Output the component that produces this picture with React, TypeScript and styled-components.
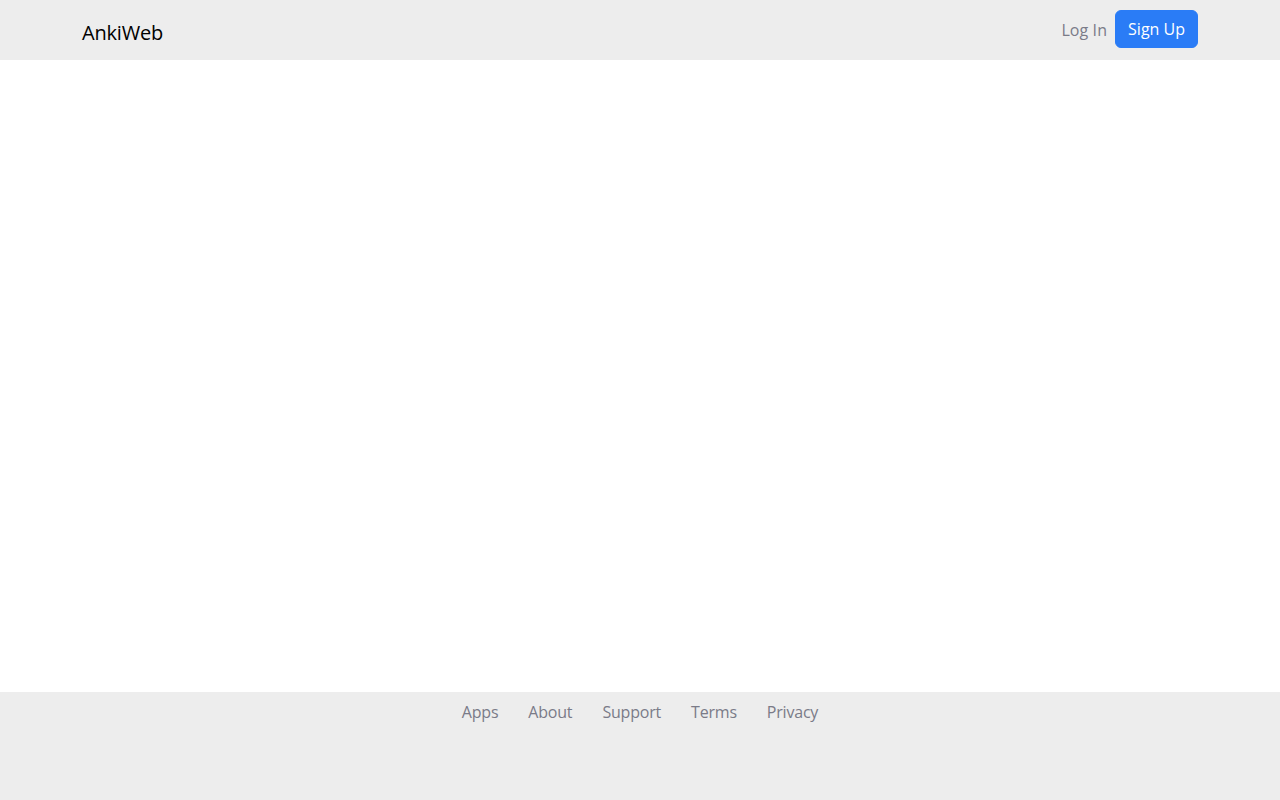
import React from 'react';
import styled, { createGlobalStyle } from 'styled-components';

const GlobalStyle = createGlobalStyle`
  html, body {
    margin: 0;
    padding: 0;
  }
  body {
    font-family: "Open Sans", "Noto Sans", "Liberation Sans", sans-serif;
    color: #212529;
    background: #fff;
  }
`;

const Page = styled.div`
  display: flex;
  flex-direction: column;
  min-height: 100vh;
`;

const NavBar = styled.header`
  background: #ededed;
  height: 60px;
  display: flex;
  align-items: center;
`;

const Container = styled.div`
  box-sizing: border-box;
  width: 100%;
  max-width: 1140px;
  margin: 0 auto;
  padding: 0 12px;
  display: flex;
  align-items: center;
  justify-content: space-between;
`;

const Brand = styled.a`
  font-size: 20px;
  color: #000;
  text-decoration: none;
  margin-top: 4px;
  letter-spacing: -0.2px;
`;

const NavActions = styled.div`
  display: flex;
  align-items: center;
  gap: 8px;
  margin-top: -2px;
`;

const NavLink = styled.a`
  font-size: 16px;
  color: #7a7b88;
  text-decoration: none;
  margin-top: 2px;
  letter-spacing: 0.1px;
`;

const PrimaryButton = styled.button`
  font-family: inherit;
  font-size: 16px;
  line-height: 24px;
  padding: 6px 12px;
  border: 1px solid #2a7cf6;
  border-radius: 6px;
  background: #2a7cf6;
  color: #fff;
  cursor: pointer;
`;

const Main = styled.main`
  flex: 1;
`;

const Footer = styled.footer`
  background: #ededed;
  height: 108px;
  display: flex;
  justify-content: center;
  align-items: flex-start;
  padding-top: 9px;
  box-sizing: border-box;
`;

const FooterLinks = styled.nav`
  display: flex;
  gap: 30px;
`;

const FooterLink = styled.a`
  font-size: 16px;
  color: #7a7b88;
  text-decoration: none;
  letter-spacing: -0.2px;
`;

const footerItems = ['Apps', 'About', 'Support', 'Terms', 'Privacy'];

export default function App() {
  return (
    <Page>
      <GlobalStyle />
      <NavBar>
        <Container>
          <Brand href="#">AnkiWeb</Brand>
          <NavActions>
            <NavLink href="#">Log In</NavLink>
            <PrimaryButton>Sign Up</PrimaryButton>
          </NavActions>
        </Container>
      </NavBar>
      <Main />
      <Footer>
        <FooterLinks>
          {footerItems.map((item) => (
            <FooterLink key={item} href="#">
              {item}
            </FooterLink>
          ))}
        </FooterLinks>
      </Footer>
    </Page>
  );
}
